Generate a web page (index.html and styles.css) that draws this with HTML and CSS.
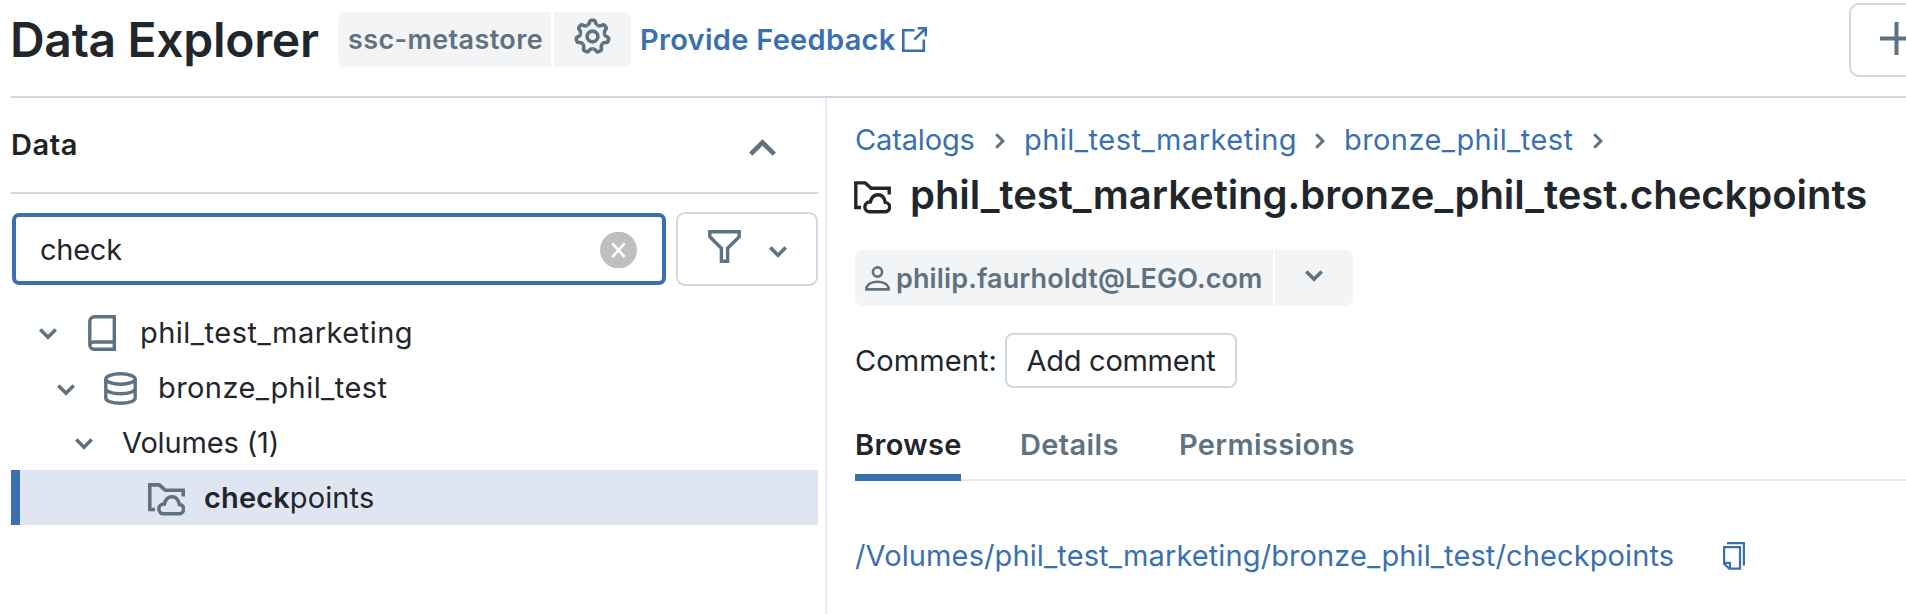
FILE: index.html
```html
<!DOCTYPE html>
<html lang="en">
<head>
<meta charset="utf-8">
<title>Data Explorer</title>
<link rel="stylesheet" href="styles.css">
</head>
<body>
<svg class="defs" width="0" height="0" aria-hidden="true">
  <symbol id="volume" viewBox="0 0 37 33">
    <path d="M7 26.5H1.8V1.9H11.2L17.2 7.2H35.2V13.6"/>
    <path d="M15.3 30.8H30.6a4.7 4.7 0 0 0 .7-9.4C30.4 16.6 28 13.7 24 13.7S17.4 16.6 16.3 21a4.9 4.9 0 0 0-1 9.8Z"/>
  </symbol>
  <symbol id="down" viewBox="0 0 18 12"><path d="M1.3 1.6L9 9.3L16.7 1.6"/></symbol>
  <symbol id="right" viewBox="0 0 10 16"><path d="M1.2 1.2L8 8L1.2 14.8"/></symbol>
</svg>

<header class="topbar">
  <h1 class="title">Data Explorer</h1>
  <div class="tag tag-store">ssc-metastore</div>
  <button class="tag tag-gear" aria-label="Settings">
    <svg class="ico" width="37" height="37" viewBox="-18.5 -18.5 37 37" stroke-width="3.6">
      <circle r="5.4"/>
      <path id="t" d="M-5.34-11.08C-3.8-11.8-3.4-12.4-3.1-13.6L-2.7-15.1Q-2.4-16.3-1.3-16.3H1.3Q2.4-16.3 2.7-15.1L3.1-13.6C3.4-12.4 3.8-11.8 5.34-11.08"/>
      <use href="#t" transform="rotate(51.43)"/>
      <use href="#t" transform="rotate(102.86)"/>
      <use href="#t" transform="rotate(154.29)"/>
      <use href="#t" transform="rotate(205.71)"/>
      <use href="#t" transform="rotate(257.14)"/>
      <use href="#t" transform="rotate(308.57)"/>
    </svg>
  </button>
  <a class="feedback"><span>Provide Feedback</span>
    <svg class="ico blue" width="25" height="25" viewBox="0 0 25 25" stroke-width="2.6"><path d="M12.5 3.2H1.3V23.7H21.8V12.6M15.8 1.2H23.8V9.2M23.4 1.6L12.4 12.6"/></svg>
  </a>
  <button class="add" aria-label="Add">
    <svg class="ico" width="33" height="33" viewBox="0 0 33 33" stroke-width="4"><path d="M16.5 0V33M0 16.5H33"/></svg>
  </button>
</header>

<div class="main">
  <aside class="side">
    <div class="side-head">
      <h2 class="side-title">Data</h2>
      <svg class="ico" width="27" height="17" viewBox="0 0 27 17" stroke-width="4.6"><path d="M1.7 15.2L13.5 3.4L25.3 15.2"/></svg>
    </div>
    <div class="search">
      <div class="field"><span>check</span>
        <svg width="37" height="36" viewBox="0 0 37 36"><ellipse cx="18.5" cy="18" rx="18.5" ry="18.3" fill="#bfbfbf"/><path d="M12.3 11.4L24.7 25M24.7 11.4L12.3 25" stroke="#fff" stroke-width="2.6"/></svg>
      </div>
      <button class="filter" aria-label="Filter">
        <svg class="ico funnel" width="33" height="33" viewBox="0 0 33 33" stroke-width="3.4"><path d="M1.8 1.8H31.2V6.8L19.6 18.2V31.2H13.4V18.2L1.8 6.8Z"/></svg>
        <svg class="ico" width="18" height="12" stroke-width="3.6"><use href="#down"/></svg>
      </button>
    </div>
    <div class="tree">
      <div class="node lvl-1">
        <svg class="ico caret" width="18" height="12" stroke-width="3.6"><use href="#down"/></svg>
        <svg class="ico book" width="29" height="36" viewBox="0 0 29 36" stroke-width="3.4"><path d="M26.3 1.8H6.3A4.5 4.5 0 0 0 1.8 6.3V30.3A4 4 0 0 0 5.8 34.2H26.3ZM1.8 30.7A3.8 3.8 0 0 1 5.6 27H26.3"/></svg>
        <span class="schema-a">phil_test_marketing</span>
      </div>
      <div class="node lvl-2">
        <svg class="ico caret" width="18" height="12" stroke-width="3.6"><use href="#down"/></svg>
        <svg class="ico db" width="33" height="33" viewBox="0 0 33 33" stroke-width="3.4"><ellipse cx="16.5" cy="7" rx="14.7" ry="5.2"/><path d="M1.8 7V26C1.8 29 8 31.3 16.5 31.3S31.2 29 31.2 26V7M1.8 16.4C1.8 19.4 8 21.8 16.5 21.8S31.2 19.4 31.2 16.4"/></svg>
        <span class="schema-b">bronze_phil_test</span>
      </div>
      <div class="node lvl-3">
        <svg class="ico caret" width="18" height="12" stroke-width="3.6"><use href="#down"/></svg>
        <span class="group">Volumes (1)</span>
      </div>
      <div class="node lvl-4">
        <svg class="ico" width="37" height="33" stroke-width="3.6"><use href="#volume"/></svg>
        <span class="leaf"><b>check</b>points</span>
      </div>
    </div>
  </aside>

  <main class="detail">
    <nav class="crumbs">
      <a class="c1">Catalogs</a><svg class="ico" width="10" height="16" stroke-width="3"><use href="#right"/></svg>
      <a class="c2">phil_test_marketing</a><svg class="ico" width="10" height="16" stroke-width="3"><use href="#right"/></svg>
      <a class="c3">bronze_phil_test</a><svg class="ico" width="10" height="16" stroke-width="3"><use href="#right"/></svg>
    </nav>
    <div class="heading">
      <svg class="ico dark" width="37" height="33" stroke-width="3.4"><use href="#volume"/></svg>
      <h2>phil_test_marketing.bronze_phil_test.checkpoints</h2>
    </div>
    <div class="owner">
      <div class="tag tag-user">
        <svg class="ico" width="25" height="25" viewBox="0 0 25 25" stroke-width="2.6"><circle cx="12.5" cy="6" r="4.6"/><path d="M1.4 23.4V21.5C3 17.8 7 15.7 12.5 15.7S22 17.8 23.6 21.5V23.4Z"/></svg>
        <span>philip.faurholdt@LEGO.com</span>
      </div>
      <button class="tag tag-more" aria-label="More"><svg class="ico" width="18" height="12" stroke-width="3.6"><use href="#down"/></svg></button>
    </div>
    <div class="comment"><span>Comment:</span><button class="btn">Add comment</button></div>
    <div class="tabs">
      <div class="tab active">Browse</div>
      <div class="tab t2">Details</div>
      <div class="tab t3">Permissions</div>
    </div>
    <div class="path">
      <a>/Volumes/phil_test_marketing/bronze_phil_test/checkpoints</a>
      <svg class="ico blue" width="22" height="28" viewBox="0 0 22 28" stroke-width="2.2"><path d="M4 1.1H20.9V23.5M1.1 5.1H17V26.6H6.2L1.1 21.8ZM1.1 20.8H7V26.4"/></svg>
    </div>
  </main>
</div>
</body>
</html>
```
FILE: styles.css
```css
:root {
  --ink: #1f272d;
  --muted: #5f7281;
  --blue: #3a70b0;
  --line: #cdd9e5;
  --soft-line: #e4eaef;
  --chip: #f3f4f6;
}
* { box-sizing: border-box; }
body {
  margin: 0;
  height: 614px;
  overflow: hidden;
  display: flex;
  flex-direction: column;
  background: #fff;
  color: var(--ink);
  font: 400 29px/40px "Inter", sans-serif;
  white-space: nowrap;
}
h1, h2 { margin: 0; font-weight: 600; }
button { font: inherit; color: inherit; border: 0; margin: 0; padding: 0; }
svg { display: block; flex: none; }
.defs { position: absolute; }
.ico { fill: none; stroke: var(--muted); }
.dark { stroke: var(--ink); }
.blue { stroke: var(--blue); }
a { color: var(--blue); }

.topbar {
  flex: none;
  height: 98px;
  margin-left: 11px;
  padding-bottom: 17px;
  border-bottom: 2px solid var(--line);
  display: flex;
  align-items: center;
}
.title {
  flex: 0 0 328px;
  margin: 1px 0 0 -1px;
  font-size: 48px;
  line-height: 60px;
  letter-spacing: -0.3px;
}
.tag {
  display: flex;
  align-items: center;
  justify-content: center;
  background: var(--chip);
  color: var(--muted);
  font-size: 27px;
  font-weight: 600;
}
.tag-store {
  width: 213px;
  height: 55px;
  padding-left: 2px;
  border-radius: 8px 0 0 8px;
  letter-spacing: 0.38px;
}
.tag-gear {
  width: 77px;
  height: 55px;
  margin-left: 3px;
  padding-bottom: 7px;
  border-radius: 0 8px 8px 0;
}
.feedback {
  display: flex;
  align-items: center;
  gap: 5px;
  margin-left: 9px;
  font-weight: 600;
  letter-spacing: 0.3px;
}
.feedback span { width: 257px; }
.feedback svg { margin-left: 0; }
.add {
  flex: none;
  width: 96px;
  height: 74px;
  margin: 1px -39px 0 auto;
  border: 2px solid var(--line);
  border-radius: 10px;
  background: #fff;
  display: flex;
  align-items: center;
  justify-content: center;
  padding: 0 2px 3px 0;
}

.main { flex: 1; display: flex; min-height: 0; }
.side {
  flex: 0 0 827px;
  padding: 0 7px 0 11px;
  border-right: 2px solid var(--soft-line);
}
.side-head {
  height: 96px;
  padding: 0 42px 0 0;
  border-bottom: 2px solid var(--line);
  display: flex;
  align-items: center;
  justify-content: space-between;
}
.side-head svg { margin-top: 5px; }
.side-title { font-size: 29px; letter-spacing: 0.6px; color: #222; }
.search {
  display: flex;
  align-items: center;
  gap: 10px;
  margin: 18px 0 19px;
  padding-left: 1px;
}
.field {
  flex: 1;
  height: 72px;
  padding: 0 25px 0 24px;
  border: 4px solid var(--blue);
  border-radius: 7px;
  display: flex;
  align-items: center;
  justify-content: space-between;
  letter-spacing: -0.25px;
}
.field span { margin-top: 2px; }
.field svg { margin-top: 2px; }
.filter {
  width: 142px;
  height: 74px;
  border: 2px solid var(--line);
  border-radius: 9px;
  background: #fff;
  display: flex;
  align-items: center;
  justify-content: space-between;
  padding: 0 29px 0 30px;
}
.funnel { margin-bottom: 5px; }
.filter svg:last-child { margin-top: 6px; }

.node { height: 55px; display: flex; align-items: center; }
.caret { margin-top: 2px; }
.lvl-1 { padding-left: 28px; }
.lvl-2 { padding-left: 46px; }
.lvl-3 { padding-left: 64px; }
.lvl-4 {
  padding-left: 128px;
  background: #dfe6f2;
  border-left: 9px solid var(--blue);
}
.book { margin: 0 23px 0 31px; }
.db { margin: 1px 21px 0 29px; }
.lvl-2 .caret { margin-top: 4px; }
.schema-a { letter-spacing: 0.48px; }
.schema-b { letter-spacing: 0.43px; }
.group { margin-left: 29px; letter-spacing: -0.15px; }
.leaf { margin: 1px 0 0 19px; letter-spacing: 0.12px; }
.leaf b { font-weight: 600; }
.lvl-4 svg { margin-top: 4px; }

.detail { flex: 1; min-width: 0; padding-left: 28px; }
.crumbs { height: 64px; padding-top: 22px; display: flex; align-items: flex-start; }
.crumbs svg { margin-top: 13px; }
.c1 { width: 140px; letter-spacing: -0.15px; }
.c2 { width: 291px; margin-left: 19px; letter-spacing: 0.48px; }
.c3 { width: 249px; margin-left: 19px; letter-spacing: 0.43px; }
.heading { display: flex; align-items: center; height: 66px; }
.heading svg { margin: 4px 19px 0 -1px; }
.heading h2 { font-size: 40px; line-height: 50px; letter-spacing: -0.04px; }
.owner { display: flex; gap: 2px; margin-top: 22px; }
.tag-user {
  width: 418px;
  height: 56px;
  padding-left: 10px;
  justify-content: flex-start;
  gap: 6px;
  border-radius: 8px 0 0 8px;
  letter-spacing: 0.12px;
}
.tag-user span { margin-top: 1px; }
.tag-more {
  width: 78px;
  height: 56px;
  padding-bottom: 4px;
  border-radius: 0 8px 8px 0;
}
.comment { display: flex; align-items: center; margin-top: 27px; }
.comment span { width: 150px; letter-spacing: 0.1px; }
.btn {
  width: 232px;
  height: 55px;
  border: 2px solid var(--line);
  border-radius: 8px;
  background: #fff;
  letter-spacing: -0.28px;
}
.tabs {
  display: flex;
  align-items: flex-end;
  height: 66px;
  margin-top: 27px;
  border-bottom: 2px solid var(--soft-line);
}
.tab {
  height: 54px;
  font-weight: 600;
  color: var(--muted);
  letter-spacing: 0.35px;
}
.active {
  width: 106px;
  height: 56px;
  margin-bottom: -2px;
  color: var(--ink);
  border-bottom: 7px solid var(--blue);
}
.t2 { margin-left: 59px; width: 159px; }
.path { display: flex; align-items: center; margin-top: 55px; }
.path a { width: 868px; letter-spacing: 0.11px; }
```
